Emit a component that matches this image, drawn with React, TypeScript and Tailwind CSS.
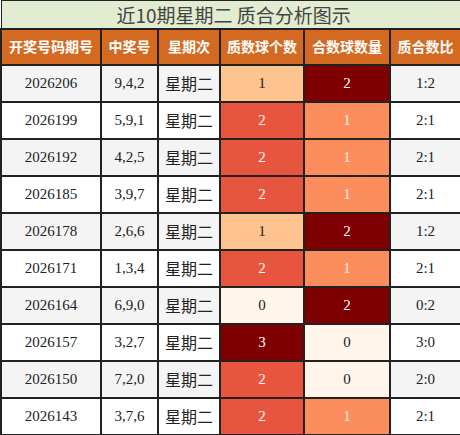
const rows = [
  ["2026206", "9,4,2", 1, 2, "1:2"],
  ["2026199", "5,9,1", 2, 1, "2:1"],
  ["2026192", "4,2,5", 2, 1, "2:1"],
  ["2026185", "3,9,7", 2, 1, "2:1"],
  ["2026178", "2,6,6", 1, 2, "1:2"],
  ["2026171", "1,3,4", 2, 1, "2:1"],
  ["2026164", "6,9,0", 0, 2, "0:2"],
  ["2026157", "3,2,7", 3, 0, "3:0"],
  ["2026150", "7,2,0", 2, 0, "2:0"],
  ["2026143", "3,7,6", 2, 1, "2:1"],
] as const;

const primeCls: Record<number, string> = {
  0: "bg-[#fff5eb] text-[#222]",
  1: "bg-[#fdc48f] text-[#222]",
  2: "bg-[#e8553e] text-white",
  3: "bg-[#7f0000] text-white",
};

const compCls: Record<number, string> = {
  0: "bg-[#fff5eb] text-[#222]",
  1: "bg-[#fc8d5c] text-[#fff1e6]",
  2: "bg-[#7f0000] text-white",
};

const headers = ["开奖号码期号", "中奖号", "星期次", "质数球个数", "合数球数量", "质合数比"];
const widths = ["w-[100px]", "w-[57px]", "w-[62px]", "w-[84px]", "w-[86px]", "w-[71px]"];

export default function App() {
  return (
    <div className="w-[460px] h-[435px] bg-white overflow-hidden">
      <table className="w-[460px] table-fixed border-collapse border border-[#222]">
        <colgroup>
          {widths.map((w, i) => (
            <col key={i} className={w} />
          ))}
        </colgroup>
        <thead>
          <tr className="h-[28px]">
            <th
              colSpan={6}
              className="bg-[#e2ecd0] border-b-2 border-[#222] text-[19px] font-normal text-[#444] leading-none pl-[115px] text-left font-['Noto_Sans_CJK_SC',sans-serif]"
            >
              近10期星期二 质合分析图示
            </th>
          </tr>
          <tr className="h-[36px]">
            {headers.map((h) => (
              <th
                key={h}
                className="bg-[#d46a22] border-2 border-[#222] border-t-0 text-white text-[14px] font-bold whitespace-nowrap px-0 font-['Noto_Sans_CJK_SC',sans-serif]"
              >
                {h}
              </th>
            ))}
          </tr>
        </thead>
        <tbody className="font-['Liberation_Serif',serif] text-[15px] text-[#222]">
          {rows.map((r, i) => (
            <tr key={r[0]} className={`h-[37px] ${i % 2 === 0 ? "bg-[#f4f4f4]" : "bg-white"}`}>
              <td className="border-2 border-[#222] text-center">{r[0]}</td>
              <td className="border-2 border-[#222] text-center">{r[1]}</td>
              <td className="border-2 border-[#222] text-center text-[16px] font-['Noto_Sans_CJK_SC',sans-serif]">星期二</td>
              <td className={`border-2 border-[#222] text-center ${primeCls[r[2]]}`}>{r[2]}</td>
              <td className={`border-2 border-[#222] text-center ${compCls[r[3]]}`}>{r[3]}</td>
              <td className="border-2 border-[#222] text-center">{r[4]}</td>
            </tr>
          ))}
        </tbody>
      </table>
    </div>
  );
}
